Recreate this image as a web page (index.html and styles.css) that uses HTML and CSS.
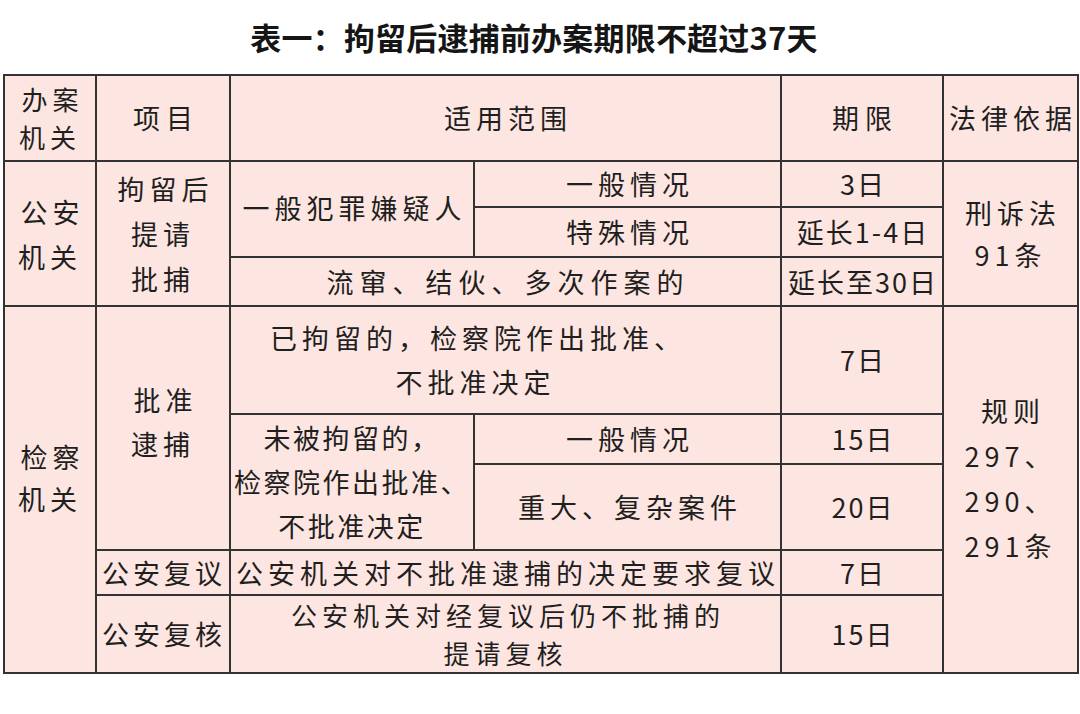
FILE: index.html
```html
<!DOCTYPE html>
<html lang="zh">
<head>
<meta charset="utf-8">
<title>表一</title>
<link rel="stylesheet" href="styles.css">
</head>
<body>
<h1 class="title">表一：拘留后逮捕前办案期限不超过37天</h1>
<div class="wrap">
<table class="grid">
  <colgroup>
    <col class="c1"><col class="c2"><col class="c3"><col class="c4"><col class="c5"><col class="c6">
  </colgroup>
  <tr class="h-head">
    <td class="stack">办案<br>机关</td>
    <td class="wide">项目</td>
    <td colspan="2">适用范围</td>
    <td class="wide">期限</td>
    <td class="nowrap">法律依据</td>
  </tr>
  <tr class="h-r1">
    <td rowspan="3" class="lh45">公安<br>机关</td>
    <td rowspan="3" class="lh45">拘留后<br>提请<br>批捕</td>
    <td rowspan="2" class="top-ish">一般犯罪嫌疑人</td>
    <td>一般情况</td>
    <td class="num">3日</td>
    <td rowspan="3" class="lh42">刑诉法<br>91条</td>
  </tr>
  <tr class="h-r2">
    <td>特殊情况</td>
    <td class="num nowrap">延长1-4日</td>
  </tr>
  <tr class="h-r3">
    <td colspan="2" class="wider">流窜、结伙、多次作案的</td>
    <td class="num nowrap">延长至30日</td>
  </tr>
  <tr class="h-r4">
    <td rowspan="5" class="lh42 raise">检察<br>机关</td>
    <td rowspan="3" class="lh44 raise-s">批准<br>逮捕</td>
    <td colspan="2" class="lh44 shift">已拘留的，检察院作出批准、<br>不批准决定</td>
    <td class="num">7日</td>
    <td rowspan="5" class="lh45 raise">规则<br>297、<br>290、<br>291条</td>
  </tr>
  <tr class="h-r5">
    <td rowspan="2" class="lh44 tight nowrap">未被拘留的，<br>检察院作出批准、<br>不批准决定</td>
    <td>一般情况</td>
    <td class="num">15日</td>
  </tr>
  <tr class="h-r6">
    <td>重大、复杂案件</td>
    <td class="num">20日</td>
  </tr>
  <tr class="h-r7">
    <td class="fill nowrap">公安复议</td>
    <td colspan="2" class="nowrap">公安机关对不批准逮捕的决定要求复议</td>
    <td class="num">7日</td>
  </tr>
  <tr class="h-r8">
    <td class="fill nowrap">公安复核</td>
    <td colspan="2" class="stack">公安机关对经复议后仍不批捕的<br>提请复核</td>
    <td class="num">15日</td>
  </tr>
</table>
</div>
</body>
</html>
```
FILE: styles.css
```css
html, body {
  margin: 0;
  padding: 0;
  background: #ffffff;
}
body {
  width: 1080px;
  height: 714px;
  overflow: hidden;
  font-family: "Noto Sans CJK SC", "Noto Sans", sans-serif;
  color: #1f1f1f;
}
.title {
  margin: 0;
  height: 74px;
  line-height: 74px;
  text-align: center;
  font-size: 31px;
  font-weight: 700;
  letter-spacing: 0.2px;
  color: #151515;
  padding-right: 12px;
}
.wrap {
  padding-left: 3px;
}
.grid {
  width: 1074px;
  table-layout: fixed;
  border-collapse: collapse;
  background: #fde6e1;
  border: 2px solid #2e2e2e;
}
.c1 { width: 92px; }
.c2 { width: 134px; }
.c3 { width: 244px; }
.c4 { width: 307px; }
.c5 { width: 162px; }
.c6 { width: 135px; }
.grid td {
  border: 2px solid #333;
  padding: 0;
  text-align: center;
  vertical-align: middle;
  font-size: 27px;
  line-height: 40px;
  letter-spacing: 5px;
  text-indent: 5px;
  overflow: hidden;
}
.h-head { height: 86px; }
.h-r1 { height: 46px; }
.h-r2 { height: 50px; }
.h-r3 { height: 49px; }
.h-r4 { height: 108px; }
.h-r5 { height: 50px; }
.h-r6 { height: 86px; }
.h-r7 { height: 45px; }
.h-r8 { height: 78px; }

.grid td.stack { font-size: 26px; line-height: 38px; }
.grid td.lh42 { line-height: 42px; }
.grid td.lh44 { line-height: 44px; }
.grid td.lh45 { line-height: 45px; }
.grid td.nowrap { white-space: nowrap; }
.grid td.wide { letter-spacing: 6px; text-indent: 6px; }
.grid td.wider { letter-spacing: 6px; }
.grid td.num { letter-spacing: 2px; text-indent: 2px; }
.grid td.tight { letter-spacing: 2.5px; text-indent: 0; }
.grid td.fill { letter-spacing: 4px; text-indent: 2px; }
.grid td.shift { padding-right: 60px; }
.grid td.raise { padding-bottom: 24px; }
.grid td.raise-s { padding-bottom: 12px; }
.grid td.top-ish { padding-bottom: 2px; }
```
